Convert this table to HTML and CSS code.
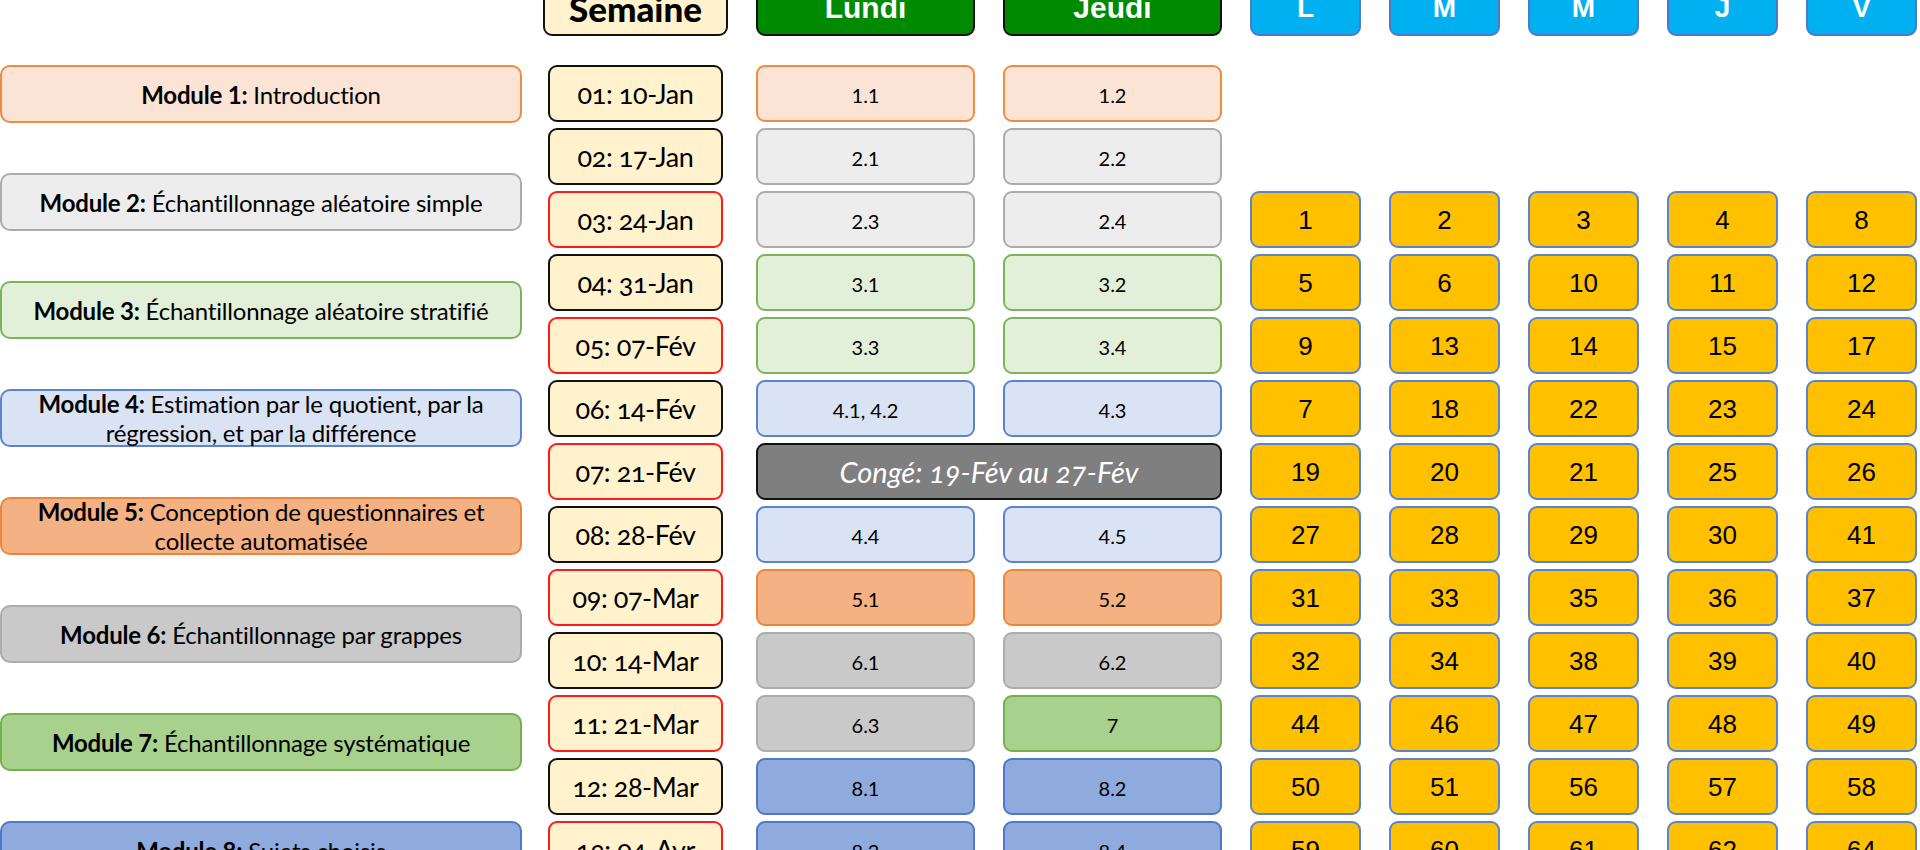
FILE: index.html
```html
<!DOCTYPE html>
<html lang="fr">
<head>
<meta charset="utf-8">
<title>Calendrier</title>
<link rel="stylesheet" href="styles.css">
</head>
<body>
<div class="page">
  <div class="modules">
    <div class="mod m1"><span><b>Module 1:</b> Introduction</span></div>
    <div class="mod m2"><span><b>Module 2:</b> Échantillonnage aléatoire simple</span></div>
    <div class="mod m3"><span><b>Module 3:</b> Échantillonnage aléatoire stratifié</span></div>
    <div class="mod m4"><span><b>Module 4:</b> Estimation par le quotient, par la<br>régression, et par la différence</span></div>
    <div class="mod m5"><span><b>Module 5:</b> Conception de questionnaires et<br>collecte automatisée</span></div>
    <div class="mod m6"><span><b>Module 6:</b> Échantillonnage par grappes</span></div>
    <div class="mod m7"><span><b>Module 7:</b> Échantillonnage systématique</span></div>
    <div class="mod m8"><span><b>Module 8:</b> Sujets choisis</span></div>
  </div>

  <div class="grid">
    <div class="hd hd-week">Semaine</div>
    <div class="hd hd-green">Lundi</div>
    <div class="hd hd-green">Jeudi</div>
    <div class="hd hd-day">L</div>
    <div class="hd hd-day">M</div>
    <div class="hd hd-day">M</div>
    <div class="hd hd-day">J</div>
    <div class="hd hd-day">V</div>

    <div class="wk">01: 10-Jan</div>
    <div class="ls c1">1.1</div><div class="ls c1">1.2</div>
    <div class="empty"></div><div class="empty"></div><div class="empty"></div><div class="empty"></div><div class="empty"></div>

    <div class="wk">02: 17-Jan</div>
    <div class="ls c2">2.1</div><div class="ls c2">2.2</div>
    <div class="empty"></div><div class="empty"></div><div class="empty"></div><div class="empty"></div><div class="empty"></div>

    <div class="wk red">03: 24-Jan</div>
    <div class="ls c2">2.3</div><div class="ls c2">2.4</div>
    <div class="dy">1</div><div class="dy">2</div><div class="dy">3</div><div class="dy">4</div><div class="dy">8</div>

    <div class="wk">04: 31-Jan</div>
    <div class="ls c3">3.1</div><div class="ls c3">3.2</div>
    <div class="dy">5</div><div class="dy">6</div><div class="dy">10</div><div class="dy">11</div><div class="dy">12</div>

    <div class="wk red">05: 07-Fév</div>
    <div class="ls c3">3.3</div><div class="ls c3">3.4</div>
    <div class="dy">9</div><div class="dy">13</div><div class="dy">14</div><div class="dy">15</div><div class="dy">17</div>

    <div class="wk">06: 14-Fév</div>
    <div class="ls c4">4.1, 4.2</div><div class="ls c4">4.3</div>
    <div class="dy">7</div><div class="dy">18</div><div class="dy">22</div><div class="dy">23</div><div class="dy">24</div>

    <div class="wk red">07: 21-Fév</div>
    <div class="conge">Congé: 19-Fév au 27-Fév</div>
    <div class="dy">19</div><div class="dy">20</div><div class="dy">21</div><div class="dy">25</div><div class="dy">26</div>

    <div class="wk">08: 28-Fév</div>
    <div class="ls c4">4.4</div><div class="ls c4">4.5</div>
    <div class="dy">27</div><div class="dy">28</div><div class="dy">29</div><div class="dy">30</div><div class="dy">41</div>

    <div class="wk red">09: 07-Mar</div>
    <div class="ls c5">5.1</div><div class="ls c5">5.2</div>
    <div class="dy">31</div><div class="dy">33</div><div class="dy">35</div><div class="dy">36</div><div class="dy">37</div>

    <div class="wk">10: 14-Mar</div>
    <div class="ls c6">6.1</div><div class="ls c6">6.2</div>
    <div class="dy">32</div><div class="dy">34</div><div class="dy">38</div><div class="dy">39</div><div class="dy">40</div>

    <div class="wk red">11: 21-Mar</div>
    <div class="ls c6">6.3</div><div class="ls c7">7</div>
    <div class="dy">44</div><div class="dy">46</div><div class="dy">47</div><div class="dy">48</div><div class="dy">49</div>

    <div class="wk">12: 28-Mar</div>
    <div class="ls c8">8.1</div><div class="ls c8">8.2</div>
    <div class="dy">50</div><div class="dy">51</div><div class="dy">56</div><div class="dy">57</div><div class="dy">58</div>

    <div class="wk red">13: 04-Avr</div>
    <div class="ls c8">8.3</div><div class="ls c8">8.4</div>
    <div class="dy">59</div><div class="dy">60</div><div class="dy">61</div><div class="dy">62</div><div class="dy">64</div>
  </div>
</div>
</body>
</html>
```

FILE: styles.css
```css
html, body {
  margin: 0;
  padding: 0;
  background: #ffffff;
  overflow: hidden;
}

body {
  font-family: Lato, "Noto Sans", sans-serif;
  color: #000;
}

.page {
  display: flex;
  align-items: flex-start;
  margin-top: -21px;
}

/* ---------- Modules column ---------- */
.modules {
  width: 522px;
  flex: none;
  display: flex;
  flex-direction: column;
  gap: 50px;
  padding-top: 86px;
}

.mod {
  height: 58px;
  box-sizing: border-box;
  border-width: 2px;
  border-style: solid;
  border-radius: 10px;
  display: flex;
  align-items: center;
  justify-content: center;
  text-align: center;
  font-size: 24px;
  line-height: 29px;
  letter-spacing: -0.2px;
}

.mod b { font-weight: 700; }

/* ---------- Schedule grid ---------- */
.grid {
  margin-left: 21px;
  display: grid;
  grid-template-columns: 185px 219px 219px repeat(5, 111px);
  grid-template-rows: 86px;
  grid-auto-rows: 63px;
  column-gap: 28px;
  row-gap: 0;
}

.hd {
  height: 57px;
  align-self: start;
  box-sizing: border-box;
  border-radius: 9px;
  display: flex;
  align-items: center;
  justify-content: center;
}

.hd-week {
  background: #fff2cc;
  border: 2px solid #111;
  font-family: Lato, sans-serif;
  font-weight: 900;
  font-size: 35px;
}

.hd-green {
  background: #008a00;
  border: 2px solid #111;
  color: #fff;
  font-family: "Liberation Sans", Arial, sans-serif;
  font-weight: 700;
  font-size: 30px;
}

.hd-day {
  background: #00b0f0;
  border: 2px solid #4f79c8;
  color: #fff;
  font-family: "Liberation Sans", Arial, sans-serif;
  font-weight: 700;
  font-size: 28px;
}

.wk, .ls, .conge, .dy, .empty {
  height: 57px;
  align-self: start;
}

.wk {
  margin-left: 5px;
  margin-right: 5px;
  box-sizing: border-box;
  background: #fff2cc;
  border: 2px solid #111;
  border-radius: 9px;
  display: flex;
  align-items: center;
  justify-content: center;
  font-size: 27px;
  font-variant-numeric: oldstyle-nums;
  letter-spacing: -0.4px;
}

.wk.red { border-color: #ff1a1a; }

.ls {
  box-sizing: border-box;
  border-width: 2px;
  border-style: solid;
  border-radius: 9px;
  display: flex;
  align-items: center;
  justify-content: center;
  font-size: 20px;
  padding-top: 2px;
}

.conge {
  grid-column: span 2;
  box-sizing: border-box;
  background: #7f7f7f;
  border: 2px solid #111;
  border-radius: 9px;
  color: #fff;
  font-style: italic;
  font-size: 29px;
  font-variant-numeric: oldstyle-nums;
  display: flex;
  align-items: center;
  justify-content: center;
}

.dy {
  box-sizing: border-box;
  background: #ffc000;
  border: 2px solid #5b84cf;
  border-radius: 9px;
  display: flex;
  align-items: center;
  justify-content: center;
  font-family: "Liberation Sans", Arial, sans-serif;
  font-size: 26px;
  padding-top: 2px;
}

/* ---------- Colour themes ---------- */
.m1, .c1 { background: #fbe3d6; border-color: #f08c42; }
.m2, .c2 { background: #ededed; border-color: #acacac; }
.m3, .c3 { background: #e2f0d9; border-color: #7ab55a; }
.m4, .c4 { background: #dae3f3; border-color: #5b84cf; }
.m5, .c5 { background: #f4b183; border-color: #ef8538; }
.m6, .c6 { background: #c9c9c9; border-color: #acacac; }
.m7, .c7 { background: #a9d18e; border-color: #74b04b; }
.m8, .c8 { background: #8faadc; border-color: #4f79c8; }
```
